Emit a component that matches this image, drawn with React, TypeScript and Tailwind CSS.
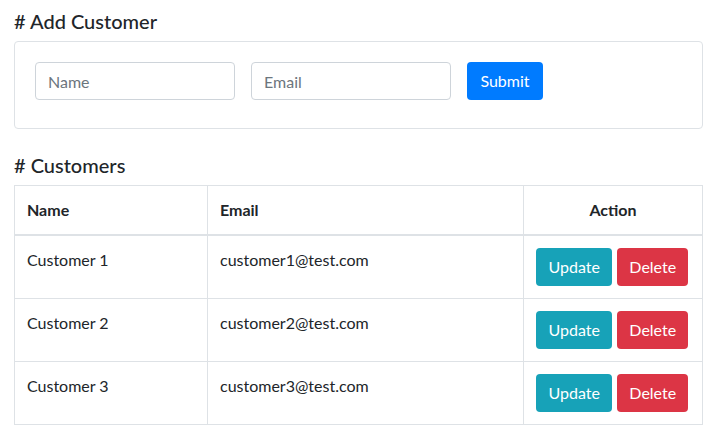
const customers = [
  { id: 1, name: "Customer 1", email: "customer1@test.com" },
  { id: 2, name: "Customer 2", email: "customer2@test.com" },
  { id: 3, name: "Customer 3", email: "customer3@test.com" },
];

export default function App() {
  return (
    <div className="min-h-screen w-full bg-white font-['Segoe_UI','Lato',sans-serif] text-[#212529]">
      <div className="w-[703px] pl-[14px] pt-[9px]">
        <h5 className="mb-2 text-[20px] font-medium leading-[24px]">
          # Add Customer
        </h5>

        <div className="rounded border border-[#dee2e6] p-5 pb-[28px]">
          <form className="flex items-center gap-4">
            <input
              type="text"
              placeholder="Name"
              className="h-[38px] w-[200px] rounded border border-[#ced4da] px-3 text-base text-[#495057] placeholder:text-[#6c757d] focus:outline-none"
            />
            <input
              type="text"
              placeholder="Email"
              className="h-[38px] w-[200px] rounded border border-[#ced4da] px-3 text-base text-[#495057] placeholder:text-[#6c757d] focus:outline-none"
            />
            <button
              type="button"
              className="h-[38px] w-[76px] rounded bg-[#007bff] text-base text-white"
            >
              Submit
            </button>
          </form>
        </div>

        <h5 className="mb-2 mt-6 text-[20px] font-medium leading-[24px]">
          # Customers
        </h5>

        <table className="w-[689px] table-fixed border-collapse border border-[#dee2e6] text-base leading-6">
          <thead>
            <tr>
              <th className="w-[193px] border border-b-2 border-[#dee2e6] p-3 text-left font-bold">
                Name
              </th>
              <th className="w-[316px] border border-b-2 border-[#dee2e6] p-3 text-left font-bold">
                Email
              </th>
              <th className="border border-b-2 border-[#dee2e6] p-3 text-center font-bold">
                Action
              </th>
            </tr>
          </thead>
          <tbody>
            {customers.map((c) => (
              <tr key={c.id}>
                <td className="border border-[#dee2e6] p-3 align-top">
                  {c.name}
                </td>
                <td className="border border-[#dee2e6] p-3 align-top">
                  {c.email}
                </td>
                <td className="border border-[#dee2e6] p-3 align-top">
                  <div className="flex justify-center gap-[5px] pr-[2px]">
                    <button
                      type="button"
                      className="h-[38px] w-[77px] rounded bg-[#17a2b8] text-base text-white"
                    >
                      Update
                    </button>
                    <button
                      type="button"
                      className="h-[38px] w-[71px] rounded bg-[#dc3545] text-base text-white"
                    >
                      Delete
                    </button>
                  </div>
                </td>
              </tr>
            ))}
          </tbody>
        </table>
      </div>
    </div>
  );
}
